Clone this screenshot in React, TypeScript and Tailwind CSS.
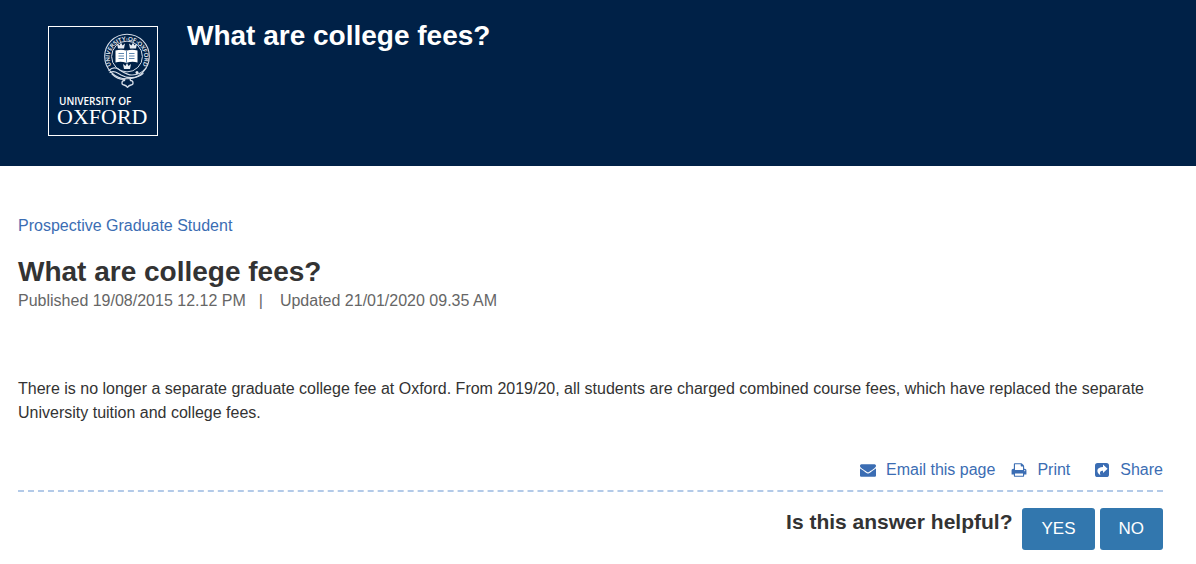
import React from "react";

const CrestLogo: React.FC = () => (
  <svg viewBox="0 0 110 110" className="h-[110px] w-[110px] shrink-0" role="img" aria-label="University of Oxford">
    <defs>
      <path id="motto" d="M66 43.500 A17.300 17.300 0 1 1 92 43.500" />
    </defs>
    <rect x="0.5" y="0.5" width="109" height="109" fill="none" stroke="#fff" />
    <g fill="none" stroke="#d5dde8">
      <circle cx="79" cy="30.500" r="22.300" strokeWidth="1.100" />
      <circle cx="79" cy="30.500" r="15.400" strokeWidth="1" />
    </g>
    <text fill="#e8edf3" fontSize="5.800" fontWeight="700" fontFamily="Lato, sans-serif">
      <textPath href="#motto" startOffset="50%" textAnchor="middle">UNIVERSITY·OF·OXFORD</textPath>
    </text>
    {/* strap */}
    <g fill="none" stroke="#d5dde8" strokeWidth="1.2" strokeLinecap="round" strokeLinejoin="round">
      <path d="M61 44.500 C64 41.500 68 41.500 71 43.500 C75 46 79 49 84 49 C89 49 94 47 98 42" />
      <path d="M62 46.500 C66 44.500 69 46.500 73 49 C79 52.500 89 53 95 47.500" />
      <path d="M64 48 C68 52 72 53.500 76 53.500" />
    </g>
    <circle cx="89" cy="46.500" r="1.500" fill="#e8edf3" />
    {/* pendant */}
    <g fill="none" stroke="#d5dde8" strokeWidth="1.3" strokeLinejoin="round">
      <path d="M77 52.500 L76.500 54.500 C73.500 54.500 73 58.500 76 59 C77 59.200 78.500 60 79.500 61.300 C80.500 60 82 59.200 83 59 C86 58.500 85.500 54.500 82.500 54.500 L82 52.500" />
    </g>
    {/* open book */}
    <path d="M67.500 24.500 Q73 22.800 78 24.500 H79 Q84 22.800 89.500 24.500 V36.500 Q84 35 79 36.800 H78 Q73 35 67.500 36.500 Z" fill="#fff" />
    <path
      d="M78.500 25 V36.500 M70.500 27.500 H76 M70.500 30 H76 M70.500 32.500 H76 M81 27.500 H86.500 M81 30 H86.500 M81 32.500 H86.500"
      stroke="#4f7ca8"
      strokeWidth="0.9"
    />
    {/* crowns */}
    <g fill="#e8edf3">
      <path d="M69 17.500 L71.500 19.500 L73 16.500 L74.500 19.500 L77 17.500 L76 22.500 H70 Z" />
      <path d="M81 17.500 L83.500 19.500 L85 16.500 L86.500 19.500 L89 17.500 L88 22.500 H82 Z" />
      <path d="M75 38 L77.500 40 L79 37 L80.500 40 L83 38 L82 43 H76 Z" />
    </g>
    <text x="11" y="79" fill="#fff" fontSize="10" fontWeight="600" fontFamily="'Open Sans', sans-serif">UNIVERSITY OF</text>
    <text x="9" y="98" fill="#fff" fontSize="22" fontFamily="'Liberation Serif', serif">OXFORD</text>
  </svg>
);

const EnvelopeIcon: React.FC = () => (
  <svg viewBox="0 0 1792 1792" className="h-4 w-4" fill="currentColor" aria-hidden="true">
    <path d="M1792 710v794q0 66-47 113t-113 47h-1472q-66 0-113-47t-47-113v-794q44 49 101 87 362 246 497 345 57 42 92.5 65.5t94.5 48 110 24.5h2q51 0 110-24.5t94.5-48 92.5-65.5q170-123 498-345 57-39 100-87zm0-294q0 79-49 151t-122 123q-376 261-468 325-10 7-42.5 31t-54 38.5-52 32.5-57.5 27-50 9h-2q-23 0-50-9t-57.5-27-52-32.5-54-38.5-42.5-31q-91-64-262-182.5t-205-142.5q-62-42-117-115.5t-55-136.5q0-78 41.5-130t118.5-52h1472q65 0 112.5 47t47.5 113z" />
  </svg>
);

const PrintIcon: React.FC = () => (
  <svg viewBox="0 0 1792 1792" className="h-4 w-4" fill="currentColor" aria-hidden="true">
    <path d="M448 1536h896v-256h-896v256zm0-640h896v-384h-160q-40 0-68-28t-28-68v-160h-640v640zm1152 64q0-26-19-45t-45-19-45 19-19 45 19 45 45 19 45-19 19-45zm128 0v416q0 13-9.500 22.500t-22.500 9.500h-224v160q0 40-28 68t-68 28h-960q-40 0-68-28t-28-68v-160h-224q-13 0-22.500-9.500t-9.500-22.500v-416q0-79 56.500-135.500t135.500-56.500h64v-544q0-40 28-68t68-28h672q40 0 88 20t76 48l152 152q28 28 48 76t20 88v256h64q79 0 135.500 56.500t56.500 135.500z" />
  </svg>
);

const ShareIcon: React.FC = () => (
  <svg viewBox="0 0 16 16" className="h-4 w-4" aria-hidden="true">
    <rect x="1" y="1" width="14" height="14" rx="2.600" fill="currentColor" />
    <path d="M9 2.600 L13.600 6.800 L9 11 V8.700 C6.400 8.700 5.400 9.800 6.400 13.200 C1.800 10.200 2.400 4.900 9 4.900 Z" fill="#fff" />
  </svg>
);

interface ActionLinkProps {
  icon: React.ReactNode;
  label: string;
}

const ActionLink: React.FC<ActionLinkProps> = ({ icon, label }) => (
  <a href="#" className="flex items-center gap-[10px] hover:underline">
    {icon}
    <span>{label}</span>
  </a>
);

const voteButton = "h-[42px] rounded-[3px] bg-[#3277ae] px-[19px] text-[17px] text-white hover:bg-[#286090]";

const App: React.FC = () => {
  return (
    <div className="bg-white font-['Liberation_Sans',Arial,sans-serif] text-base text-[#333333]">
      <header className="flex items-start gap-[29px] bg-[#002147] px-12 pt-[26px] pb-[30px]">
        <CrestLogo />
        <h2 className="-mt-2 text-[28px] leading-9 font-bold text-white">What are college fees?</h2>
      </header>

      <main className="pt-12 pr-[33px] pb-3 pl-[18px]">
        <a href="#" className="block leading-6 text-[#3b6db3]">Prospective Graduate Student</a>

        <h1 className="mt-4 text-[28px] leading-9 font-bold">What are college fees?</h1>
        <div className="flex leading-[22px] text-[#666666]">
          <span>Published 19/08/2015 12.12 PM</span>
          <span className="mr-[17px] ml-[13px]">|</span>
          <span>Updated 21/01/2020 09.35 AM</span>
        </div>

        <p className="mt-[65px] leading-6">
          There is no longer a separate graduate college fee at Oxford. From 2019/20, all students are charged combined
          course fees, which have replaced the separate University tuition and college fees.
        </p>

        <div className="mt-[33px] flex justify-end border-b-2 border-dashed border-[#b3cae8] pb-2 leading-6 text-[#3b6db3]">
          <ActionLink icon={<EnvelopeIcon />} label="Email this page" />
          <div className="mr-6 ml-4">
            <ActionLink icon={<PrintIcon />} label="Print" />
          </div>
          <ActionLink icon={<ShareIcon />} label="Share" />
        </div>

        <div className="mt-4 flex items-start justify-end">
          <h3 className="mr-[10px] text-[21px] leading-7 font-bold">Is this answer helpful?</h3>
          <div className="flex gap-[5px]">
            <button type="button" className={voteButton}>YES</button>
            <button type="button" className={voteButton}>NO</button>
          </div>
        </div>
      </main>
    </div>
  );
};

export default App;
